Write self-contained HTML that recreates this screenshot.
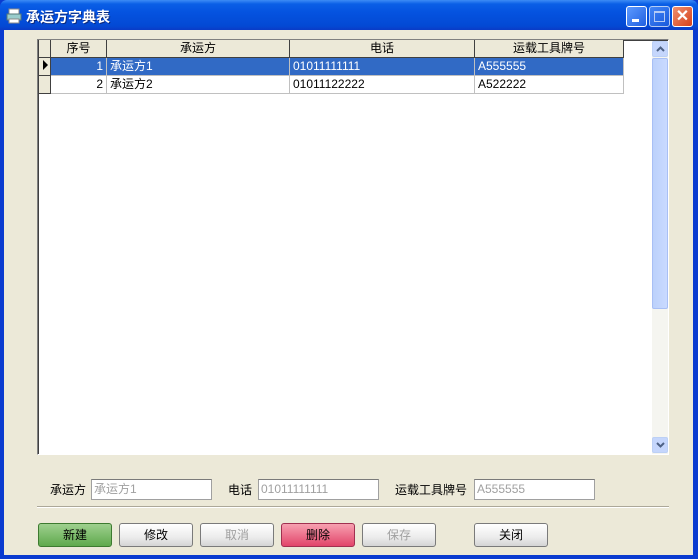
<!DOCTYPE html>
<html><head><meta charset="utf-8"><style>
*{margin:0;padding:0;box-sizing:border-box}
body{width:698px;height:559px;overflow:hidden;font-family:"Liberation Sans","Noto Sans CJK SC",sans-serif;font-size:12px;position:relative;background:#0a3bd0}
.abs{position:absolute}
#title{left:0;top:0;width:698px;height:30px;background:linear-gradient(#3d8cf5 0,#0a5fe6 4px,#0553e0 12px,#0349d4 26px,#0a3bc6 30px);border-radius:7px 7px 0 0}
#title .t{left:26px;top:7px;color:#fff;font-weight:bold;font-size:14px;text-shadow:1px 1px #0a2a80}
#body{left:4px;top:30px;width:689px;height:525px;background:#ece9d8}
.wb{top:6px;width:21px;height:21px;border:1px solid #fff;border-radius:3px;background:linear-gradient(135deg,#5d9aff,#2160e0)}
#grid{left:37px;top:39px;width:632px;height:416px;background:#fff;border:1px solid #808080;border-right-color:#fff;border-bottom-color:#fff;box-shadow:inset 1px 1px #404040}
.c{position:absolute;height:18px;line-height:17px;white-space:nowrap;overflow:hidden;padding:0 3px}
.h{background:#ece9d8;border-right:1px solid #404040;border-bottom:1px solid #404040;text-align:center;top:0}
.r{border-right:1px solid #c0c0c0;border-bottom:1px solid #c0c0c0}
.sel{background:#316ac5;color:#fff}
.lbl{top:481px}
.tb{top:479px;height:21px;border:1px solid #a0a0a0;border-top-color:#7a7a7a;background:#fff;color:#a0a0a0;padding:2px 2px;line-height:15px}
.btn{top:523px;width:74px;height:24px;border:1px solid #7a7a7a;border-radius:3px;text-align:center;line-height:22px;background:linear-gradient(#fff,#ececec 60%,#d4d4d4)}
.arr{left:614px;width:16px;height:16px;border:1px solid #bcd0f5;border-radius:2px;background:#c5d6fc}
</style></head><body>
<div id="title" class="abs">
 <svg class="abs" style="left:6px;top:8px" width="16" height="16"><rect x="3" y="1" width="10" height="5" fill="#fff" stroke="#888"/><rect x="1" y="6" width="14" height="6" fill="#9cc" stroke="#577"/><rect x="3" y="11" width="10" height="4" fill="#fff" stroke="#888"/></svg>
 <div class="abs t">承运方字典表</div>
 <div class="abs wb" style="left:626px"><div class="abs" style="left:5px;top:12px;width:7px;height:3px;background:#fff"></div></div>
 <div class="abs wb" style="left:649px;opacity:.7"><div class="abs" style="left:4px;top:4px;width:11px;height:11px;border:1px solid #fff;border-top-width:2px"></div></div>
 <div class="abs wb" style="left:672px;background:linear-gradient(135deg,#f09070,#d5411a);color:#fff;font-weight:bold;font-size:16px;text-align:center;line-height:19px">✕</div>
</div>
<div id="body" class="abs"></div>
<div id="grid" class="abs">
 <div class="c h" style="left:1px;width:12px"></div>
 <div class="c h" style="left:13px;width:56px">序号</div>
 <div class="c h" style="left:69px;width:183px">承运方</div>
 <div class="c h" style="left:252px;width:185px">电话</div>
 <div class="c h" style="left:437px;width:149px">运载工具牌号</div>
 <div class="c h" style="left:1px;top:18px;width:12px"><svg width="8" height="14"><path d="M1 2 L6 7 L1 12Z" fill="#000"/></svg></div>
 <div class="c h" style="left:1px;top:36px;width:12px"></div>
 <div class="c r sel" style="left:13px;top:18px;width:56px;text-align:right">1</div>
 <div class="c r sel" style="left:69px;top:18px;width:183px">承运方1</div>
 <div class="c r sel" style="left:252px;top:18px;width:185px">01011111111</div>
 <div class="c r sel" style="left:437px;top:18px;width:149px">A555555</div>
 <div class="c r" style="left:13px;top:36px;width:56px;text-align:right">2</div>
 <div class="c r" style="left:69px;top:36px;width:183px">承运方2</div>
 <div class="c r" style="left:252px;top:36px;width:185px">01011122222</div>
 <div class="c r" style="left:437px;top:36px;width:149px">A522222</div>
 <div class="abs" style="left:614px;top:1px;width:16px;height:413px;background:#f5f5f0"></div>
 <div class="abs arr" style="top:1px"><svg class="abs" style="left:3px;top:4px" width="9" height="6"><path d="M1 5 L4.5 1.5 L8 5" fill="none" stroke="#4d6185" stroke-width="2"/></svg></div>
 <div class="abs" style="left:614px;top:18px;width:16px;height:251px;border:1px solid #a8bff5;border-radius:2px;background:linear-gradient(90deg,#bcd1fb,#c9daff)"></div>
 <div class="abs arr" style="top:397px"><svg class="abs" style="left:3px;top:4px" width="9" height="6"><path d="M1 1 L4.5 4.5 L8 1" fill="none" stroke="#4d6185" stroke-width="2"/></svg></div>
</div>
<div class="abs lbl" style="left:50px">承运方</div>
<div class="abs tb" style="left:91px;width:121px">承运方1</div>
<div class="abs lbl" style="left:228px">电话</div>
<div class="abs tb" style="left:258px;width:121px">01011111111</div>
<div class="abs lbl" style="left:395px">运载工具牌号</div>
<div class="abs tb" style="left:474px;width:121px">A555555</div>
<div class="abs" style="left:37px;top:506px;width:632px;height:2px;border-top:1px solid #aca899;border-bottom:1px solid #fff"></div>
<div class="abs btn" style="left:38px;background:linear-gradient(#9ed08e,#5fa94d);border-color:#3d7a30">新建</div>
<div class="abs btn" style="left:119px">修改</div>
<div class="abs btn" style="left:200px;color:#a0a0a0">取消</div>
<div class="abs btn" style="left:281px;background:linear-gradient(#f7a0b0,#e2456a);border-color:#a03050">删除</div>
<div class="abs btn" style="left:362px;color:#a0a0a0">保存</div>
<div class="abs btn" style="left:474px">关闭</div>
</body></html>
